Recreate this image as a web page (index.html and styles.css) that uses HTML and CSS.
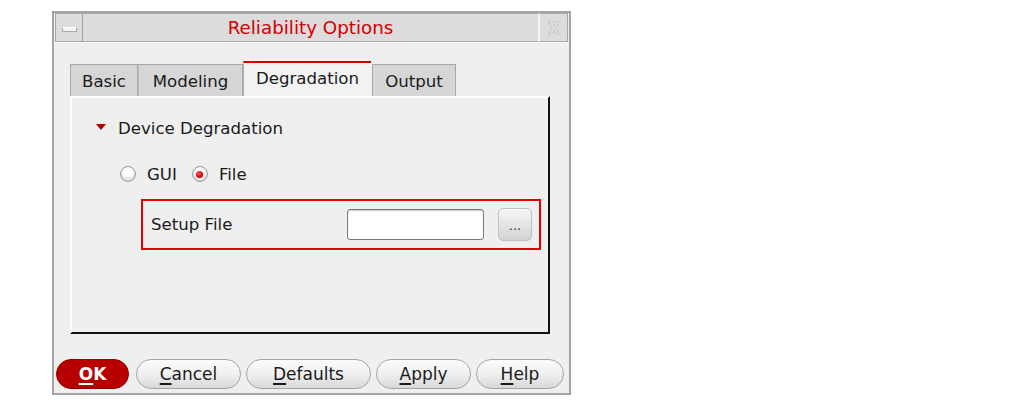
FILE: index.html
```html
<!DOCTYPE html>
<html>
<head>
<meta charset="utf-8">
<link rel="stylesheet" href="styles.css">
</head>
<body>
<div class="dialog">
  <div class="titlebar">
    <div class="tb-btn tb-min"><span class="min-bar"></span></div>
    <div class="tb-title">Reliability Options</div>
    <div class="tb-btn tb-close">
      <svg width="18" height="18" viewBox="0 0 18 18"><path d="M3 3 L7 3 L9 6 L11 3 L15 3 L11 9 L15 15 L11 15 L9 12 L7 15 L3 15 L7 9 Z" fill="none" stroke="#c8c8c8" stroke-width="1.3" stroke-dasharray="2 1.5"/></svg>
    </div>
  </div>
  <div class="content">
    <div class="tabs">
      <div class="tab tab-basic">Basic</div>
      <div class="tab tab-model">Modeling</div>
      <div class="tab tab-active">Degradation</div>
      <div class="tab tab-out">Output</div>
    </div>
    <div class="panel">
      <div class="section-head"><span class="tri"></span>Device Degradation</div>
      <div class="radios">
        <span class="radio"></span><span class="rlabel">GUI</span>
        <span class="radio on"></span><span class="rlabel">File</span>
      </div>
      <div class="setup-box">
        <span class="setup-label">Setup File</span>
        <span class="field"></span>
        <span class="browse">...</span>
      </div>
    </div>
  </div>
  <div class="buttons">
    <div class="btn btn-ok"><u>O</u>K</div>
    <div class="btn btn-cancel"><u>C</u>ancel</div>
    <div class="btn btn-defaults"><u>D</u>efaults</div>
    <div class="btn btn-apply"><u>A</u>pply</div>
    <div class="btn btn-help"><u>H</u>elp</div>
  </div>
</div>
</body>
</html>
```

FILE: styles.css
```css
html, body {
  margin: 0;
  padding: 0;
  background: #ffffff;
}
body {
  font-family: "DejaVu Sans", "Liberation Sans", sans-serif;
  font-size: 16px;
  color: #1a1a1a;
}
.dialog {
  margin-left: 52px;
  margin-top: 11px;
  width: 515px;
  height: 380px;
  border: 2px solid #a3a3a3;
  background: #efefef;
  display: flex;
  flex-direction: column;
}
.titlebar {
  display: flex;
  height: 29px;
  border-bottom: 1px solid #f8f8f8;
}
.tb-btn {
  width: 26px;
  background: #dcdcdc;
  border: 1px solid #a8a8a8;
  display: flex;
  align-items: center;
  justify-content: center;
}
.tb-min {
  margin-left: 1px;
  border-right: 1px solid #a0a0a0;
}
.min-bar {
  width: 13px;
  height: 3px;
  background: #f4f4f4;
  border: 1px solid #a8a8a8;
  border-top-color: #fff;
  margin-top: 3px;
}
.tb-close {
  width: 27px;
  margin-right: 1px;
  border-left: 2px solid #f4f4f4;
}
.tb-title {
  flex: 1;
  background: #dcdcdc;
  border-top: 1px solid #a8a8a8;
  border-bottom: 1px solid #a8a8a8;
  color: #d40000;
  font-size: 18.3px;
  text-align: center;
  line-height: 27px;
}
.content {
  padding: 19px 0 0 16px;
  height: 272px;
}
.tabs {
  display: flex;
  align-items: flex-end;
  height: 34px;
}
.tab {
  height: 32px;
  box-sizing: border-box;
  background: #d6d6d6;
  border: 1px solid #a8a8a8;
  border-bottom: none;
  text-align: center;
  line-height: 33px;
  font-size: 16.6px;
  color: #1a1a1a;
}
.tab-basic { width: 68px; }
.tab-model { width: 105px; border-left: 1px solid #bdbdbd; }
.tab-active {
  width: 128px;
  height: 35px;
  background: #f2f2f2;
  border: none;
  border-top: 2px solid #d40000;
  border-left: 1px solid #b0b0b0;
  line-height: 32px;
}
.tab-out { width: 84px; margin-left: 1px; }
.panel {
  width: 480px;
  height: 238px;
  box-sizing: border-box;
  border-left: 2px solid #ffffff;
  border-top: 2px solid #ffffff;
  border-right: 2px solid #111111;
  border-bottom: 2px solid #111111;
  background: #efefef;
  padding: 20px 0 0 24px;
}
.section-head {
  display: flex;
  align-items: center;
  height: 20px;
  font-size: 16.6px;
}
.tri {
  width: 0;
  height: 0;
  border-left: 5px solid transparent;
  border-right: 5px solid transparent;
  border-top: 6px solid #b00000;
  margin-right: 12px;
  margin-top: -3px;
}
.radios {
  display: flex;
  align-items: center;
  height: 20px;
  margin-top: 26px;
  margin-left: 24px;
  font-size: 16.6px;
}
.radio {
  width: 16px;
  height: 16px;
  border-radius: 50%;
  box-sizing: border-box;
  border: 1px solid #9a9a9a;
  background: radial-gradient(circle at 50% 35%, #ffffff 30%, #dcdcdc 75%, #bcbcbc 100%);
  margin-right: 11px;
  position: relative;
}
.radio.on::after {
  content: "";
  position: absolute;
  left: 3.5px;
  top: 3.5px;
  width: 7px;
  height: 7px;
  border-radius: 50%;
  background: radial-gradient(circle at 40% 35%, #ff5050, #c00000 70%);
}
.rlabel { margin-right: 15px; }
.setup-box {
  display: flex;
  align-items: center;
  width: 400px;
  height: 51px;
  box-sizing: border-box;
  border: 2px solid #e40000;
  margin-top: 15px;
  margin-left: 45px;
  padding-left: 8px;
}
.setup-label {
  width: 196px;
  font-size: 16.6px;
}
.field {
  width: 137px;
  height: 31px;
  box-sizing: border-box;
  border: 1px solid #7a7a7a;
  border-radius: 3px;
  background: #ffffff;
  box-shadow: inset 0 1px 1px #c8c8c8;
}
.browse {
  width: 34px;
  height: 33px;
  box-sizing: border-box;
  margin-left: 14px;
  border: 1px solid #c0c0c0;
  border-radius: 5px;
  background: linear-gradient(#f6f6f6, #d2d2d2);
  text-align: center;
  line-height: 34px;
  font-size: 13px;
  color: #333;
}
.buttons {
  display: flex;
  align-items: center;
  padding: 25px 0 0 2px;
  gap: 5px;
}
.btn {
  height: 30px;
  box-sizing: border-box;
  border: 1px solid #a4a4a4;
  border-radius: 15px;
  background: linear-gradient(#fbfbfb 0%, #f0f0f0 50%, #d8d8d8 100%);
  text-align: center;
  line-height: 28px;
  font-size: 17px;
  color: #1a1a1a;
}
.btn u { text-decoration-thickness: 1.5px; text-underline-offset: 3px; }
.btn-ok {
  width: 73px;
  background: #b80000;
  border-color: #900000;
  color: #ffffff;
  font-weight: bold;
}
.btn-cancel { width: 105px; margin-left: 2px; }
.btn-defaults { width: 125px; }
.btn-apply { width: 95px; }
.btn-help { width: 88px; }
```
